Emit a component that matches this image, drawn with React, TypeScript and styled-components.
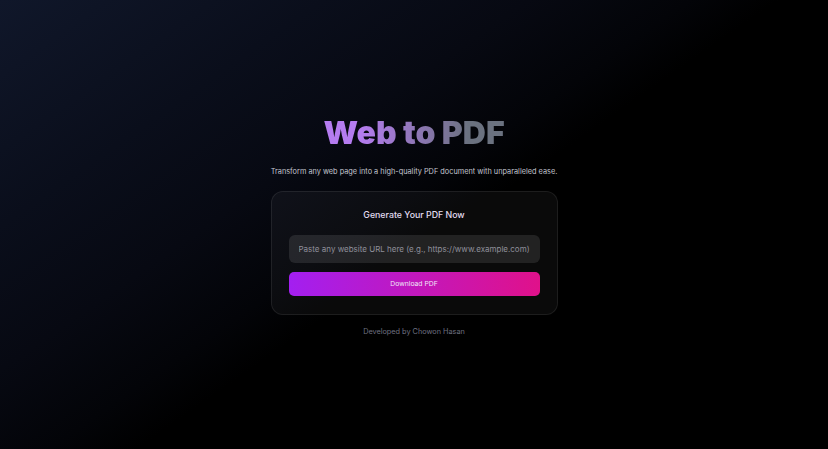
import styled, { createGlobalStyle } from "styled-components";

const GlobalStyle = createGlobalStyle`
  * {
    box-sizing: border-box;
    margin: 0;
    padding: 0;
  }

  body {
    font-family: "Inter", "Noto Sans", sans-serif;
    background: #000;
  }
`;

export default function App() {
  return (
    <>
      <GlobalStyle />
      <Page>
        <Main>
          <Title>Web to PDF</Title>
          <Subtitle>
            Transform any web page into a high-quality PDF document with
            unparalleled ease.
          </Subtitle>
          <Card>
            <CardTitle>Generate Your PDF Now</CardTitle>
            <UrlInput
              type="text"
              placeholder="Paste any website URL here (e.g., https://www.example.com)"
            />
            <DownloadButton>Download PDF</DownloadButton>
          </Card>
          <Footer>Developed by Chowon Hasan</Footer>
        </Main>
      </Page>
    </>
  );
}

const Page = styled.div`
  min-height: 100vh;
  width: 100%;

  display: flex;
  align-items: center;
  justify-content: center;

  background: linear-gradient(
    145deg,
    #10172a 0%,
    #0a0e1b 22%,
    #070912 36%,
    #030408 47%,
    #000 53%
  );
`;

const Main = styled.main`
  display: flex;
  flex-direction: column;
  align-items: center;
`;

const Title = styled.h1`
  font-size: 32px;
  font-weight: 900;
  letter-spacing: 0;
  line-height: 38px;

  background: linear-gradient(to right, #b57cf0 20%, #6b7280 80%);
  -webkit-background-clip: text;
  background-clip: text;
  color: transparent;
`;

const Subtitle = styled.p`
  margin-top: 14px;
  font-size: 7.35px;
  line-height: 12px;
  color: #c4c6d0;
`;

const Card = styled.section`
  margin-top: 13px;
  width: 287px;
  padding: 16px 17px 18px;

  display: flex;
  flex-direction: column;
  align-items: stretch;

  background: rgba(255, 255, 255, 0.04);
  border: 1px solid rgba(255, 255, 255, 0.08);
  border-radius: 12px;
`;

const CardTitle = styled.h2`
  text-align: center;
  font-size: 8.8px;
  font-weight: 500;
  line-height: 14px;
  color: #e2ddf0;
`;

const UrlInput = styled.input`
  margin-top: 13px;
  height: 28px;
  width: 100%;
  padding: 0 10px;

  font-family: inherit;
  font-size: 8px;
  color: #e5e7eb;

  background: rgba(255, 255, 255, 0.1);
  border: none;
  border-radius: 6px;
  outline: none;

  &::placeholder {
    color: #8f8f9a;
  }
`;

const DownloadButton = styled.button`
  margin-top: 9px;
  height: 24px;
  width: 100%;

  font-family: inherit;
  font-size: 6.8px;
  color: #f1e6f8;

  background: linear-gradient(to right, #a31ff0, #e0118a);
  border: none;
  border-radius: 5px;
  cursor: pointer;
`;

const Footer = styled.p`
  margin-top: 12px;
  font-size: 7.3px;
  color: #6f7180;
`;
